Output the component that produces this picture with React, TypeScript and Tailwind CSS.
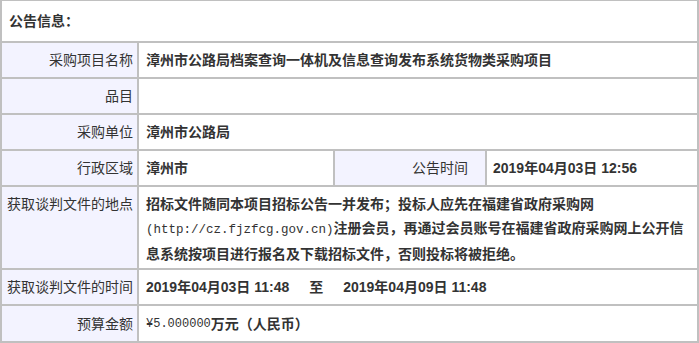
import React from "react";

const sans = { fontFamily: '"Liberation Sans", "Noto Sans CJK SC", sans-serif' };

function Label({ children, className = "" }: { children: React.ReactNode; className?: string }) {
  return (
    <div className={`w-[137px] shrink-0 border-r-2 border-[#c0c0c0] bg-[#f3f3ff] pr-[4px] text-right font-normal ${className}`}>
      {children}
    </div>
  );
}

export default function App() {
  return (
    <div
      className="w-[699px] h-[343px] bg-white text-[14px] leading-[24px] text-[#333] border-l-2 border-t border-[#c0c0c0] overflow-hidden"
      style={sans}
    >
      <div className="flex h-[42px] items-center border-b-2 border-r-2 border-[#c0c0c0] pl-[7px] font-bold">
        公告信息：
      </div>

      <div className="flex h-[36px] border-b-2 border-[#c0c0c0]">
        <Label className="flex items-center justify-end">采购项目名称</Label>
        <div className="flex flex-1 items-center border-r-2 border-[#c0c0c0] pl-[7px] font-bold">
          漳州市公路局档案查询一体机及信息查询发布系统货物类采购项目
        </div>
      </div>

      <div className="flex h-[36px] border-b-2 border-[#c0c0c0]">
        <Label className="flex items-center justify-end">品目</Label>
        <div className="flex-1 border-r-2 border-[#c0c0c0]" />
      </div>

      <div className="flex h-[36px] border-b-2 border-[#c0c0c0]">
        <Label className="flex items-center justify-end">采购单位</Label>
        <div className="flex flex-1 items-center border-r-2 border-[#c0c0c0] pl-[7px] font-bold">漳州市公路局</div>
      </div>

      <div className="flex h-[36px] border-b-2 border-[#c0c0c0]">
        <Label className="flex items-center justify-end">行政区域</Label>
        <div className="flex w-[196px] shrink-0 items-center border-r-2 border-[#c0c0c0] pl-[7px] font-bold">漳州市</div>
        <div className="flex w-[152px] shrink-0 items-center justify-end border-r-2 border-[#c0c0c0] bg-[#f3f3ff] pr-[17px]">
          公告时间
        </div>
        <div className="flex flex-1 items-center border-r-2 border-[#c0c0c0] pl-[6px] font-bold">2019年04月03日 12:56</div>
      </div>

      <div className="flex h-[83px] border-b-2 border-[#c0c0c0]">
        <Label className="pt-[5px]">获取谈判文件的地点</Label>
        <div className="flex-1 whitespace-nowrap border-r-2 border-[#c0c0c0] pl-[7px] pt-[5px] font-bold">
          招标文件随同本项目招标公告一并发布；投标人应先在福建省政府采购网
          <br />
          <span className="text-[12.5px] font-normal" style={{ fontFamily: '"Liberation Mono", monospace' }}>
            (http://cz.fjzfcg.gov.cn)
          </span>
          注册会员，再通过会员账号在福建省政府采购网上公开信
          <br />
          息系统按项目进行报名及下载招标文件，否则投标将被拒绝。
        </div>
      </div>

      <div className="flex h-[36px] border-b-2 border-[#c0c0c0]">
        <Label className="flex items-center justify-end">获取谈判文件的时间</Label>
        <div className="flex flex-1 items-center whitespace-nowrap border-r-2 border-[#c0c0c0] pl-[7px] font-bold">
          <span>2019年04月03日 11:48</span>
          <span className="mx-[20px]">至</span>
          <span>2019年04月09日 11:48</span>
        </div>
      </div>

      <div className="flex h-[37px] border-b-2 border-[#c0c0c0]">
        <Label className="flex items-center justify-end">预算金额</Label>
        <div className="flex flex-1 items-center border-r-2 border-[#c0c0c0] pl-[7px] font-bold">
          <span className="text-[12px] font-normal" style={{ fontFamily: '"Liberation Mono", monospace' }}>
            ¥5.000000
          </span>
          万元（人民币）
        </div>
      </div>
    </div>
  );
}
